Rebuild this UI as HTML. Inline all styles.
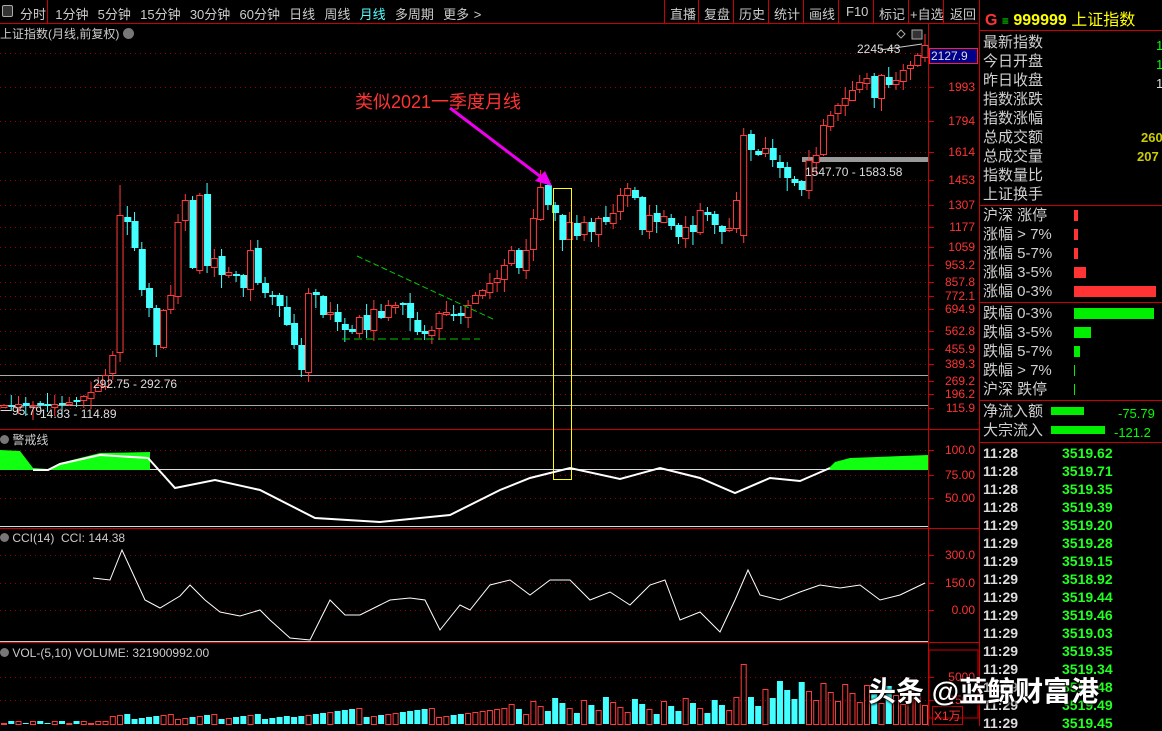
<!DOCTYPE html>
<html><head><meta charset="utf-8">
<style>
*{margin:0;padding:0;box-sizing:border-box}
body{width:1162px;height:726px;background:#000;overflow:hidden;position:relative;font-family:"Liberation Sans","Noto Sans CJK SC",sans-serif;color:#c8c8c8}
.a{position:absolute;white-space:nowrap}
.tab{font-size:13px;top:4px}
.rp{font-size:15px;color:#d0d0d0;line-height:19px}
.tm{font-size:14px;font-weight:bold}
</style></head><body>
<svg id="s" width="1162" height="726" style="position:absolute;left:0;top:0">
</svg>
<div class="a" style="left:2px;top:5px;width:11px;height:12px;border:1px solid #aaa;border-radius:2px;background:#333"></div>
<div class="a tab" style="left:20px;color:#ccc;word-spacing:1px">分时&nbsp; 1分钟&nbsp; 5分钟&nbsp; 15分钟&nbsp; 30分钟&nbsp; 60分钟&nbsp; 日线&nbsp; 周线&nbsp; <span style="color:#5ff">月线</span>&nbsp; 多周期&nbsp; 更多 &gt;</div>
<div class="a tab" style="left:670px;color:#ccc">直播</div>
<div class="a tab" style="left:704px;color:#ccc">复盘</div>
<div class="a tab" style="left:739px;color:#ccc">历史</div>
<div class="a tab" style="left:774px;color:#ccc">统计</div>
<div class="a tab" style="left:809px;color:#ccc">画线</div>
<div class="a tab" style="left:846px;color:#ccc">F10</div>
<div class="a tab" style="left:879px;color:#ccc">标记</div>
<div class="a tab" style="left:910px;color:#ccc">+自选</div>
<div class="a tab" style="left:950px;color:#ccc">返回</div>
<div class="a" style="left:0;top:25px;font-size:12px;color:#ccc">上证指数(月线,前复权) <span style="display:inline-block;width:11px;height:11px;border-radius:6px;background:#777;vertical-align:-1px"></span></div>
<div class="a" style="left:355px;top:88px;font-size:18px;color:#f33">类似2021一季度月线</div>
<div class="a" style="left:857px;top:42px;font-size:12px;color:#ddd">2245.43</div>
<div class="a" style="left:93px;top:377px;font-size:12px;color:#ddd">292.75 - 292.76</div>
<div class="a" style="left:805px;top:165px;font-size:12px;color:#ddd">1547.70 - 1583.58</div>
<div class="a" style="left:0;top:402px;font-size:12px;color:#ddd">一95.79</div>
<div class="a" style="left:40px;top:407px;font-size:12px;color:#ddd">14.83 - 114.89</div>
<div class="a" style="left:0;top:431px;font-size:12px;color:#ccc"><span style="display:inline-block;width:9px;height:9px;border-radius:5px;background:#777"></span> 警戒线</div>
<div class="a" style="left:0;top:531px;font-size:12px;color:#ccc"><span style="display:inline-block;width:9px;height:9px;border-radius:5px;background:#777"></span> CCI(14)&nbsp; CCI: 144.38</div>
<div class="a" style="left:0;top:646px;font-size:12px;color:#ccc"><span style="display:inline-block;width:9px;height:9px;border-radius:5px;background:#777"></span> VOL-(5,10) VOLUME: 321900992.00</div>
<div class="a" style="left:929px;top:48px;width:49px;height:16px;background:#00008b;border:1px solid #f22;color:#ddd;font-size:12px;padding-left:1px">2127.9</div>
<div id="ax"></div>
<div class="a" style="left:985px;top:6px;font-size:16px"><span style="color:#f33;font-weight:bold">G</span> <span style="color:#0f0;font-size:12px">≡</span> <span style="color:#ff0;font-weight:bold">999999</span> <span style="color:#ff0">上证指数</span></div>
<div class="a rp" style="left:983px;top:33px">最新指数<br>今日开盘<br>昨日收盘<br>指数涨跌<br>指数涨幅<br>总成交额<br>总成交量<br>指数量比<br>上证换手</div>
<div class="a" style="left:1156px;top:36px;font-size:13px;color:#0f0;line-height:19px">1<br>1<br><span style="color:#ddd">1</span></div>
<div class="a" style="left:1141px;top:128px;font-size:13px;color:#cc0;font-weight:bold;line-height:19px">260<br><span style="margin-left:-4px">207</span></div>
<div class="a rp" style="left:983px;top:206px">沪深 涨停<br>涨幅 &gt; 7%<br>涨幅 5-7%<br>涨幅 3-5%<br>涨幅 0-3%</div>
<div class="a rp" style="left:983px;top:304px">跌幅 0-3%<br>跌幅 3-5%<br>跌幅 5-7%<br>跌幅 &gt; 7%<br>沪深 跌停</div>
<div class="a rp" style="left:983px;top:402px">净流入额<br>大宗流入</div>
<div class="a" style="left:1118px;top:404px;font-size:13px;color:#0f0;line-height:19px">-75.79<br><span style="margin-left:-4px">-121.2</span></div>
<div id="tl"></div>
<div class="a" style="left:868px;top:670px;font-size:28px;color:#fff;font-weight:bold;text-shadow:0 0 3px #000,1px 1px 2px #000">头条 @蓝鲸财富港</div>
<script>
(function(){
var s=document.getElementById('s'),h='';
function L(x1,y1,x2,y2,c,w,d){h+='<line x1="'+x1+'" y1="'+y1+'" x2="'+x2+'" y2="'+y2+'" stroke="'+c+'" stroke-width="'+(w||1)+'"'+(d?' stroke-dasharray="'+d+'"':'')+'/>';}
function R(x,y,w,hh,f,st){h+='<rect x="'+x+'" y="'+y+'" width="'+w+'" height="'+hh+'" fill="'+f+'"'+(st?' stroke="'+st+'"':'')+'/>';}
L(0,23.5,978,23.5,'#c00');L(47.5,0,47.5,23,'#c00');
[664,698,733,768,803,838,873,908,943].forEach(function(x){L(x+.5,0,x+.5,23,'#c00')});
L(928.5,24,928.5,726,'#c00');L(979.5,0,979.5,726,'#c00');
L(0,429.5,979,429.5,'#c00');L(0,528.5,979,528.5,'#c00');L(0,642.5,979,642.5,'#c00');
L(980,30.5,1162,30.5,'#c00');L(980,205.5,1162,205.5,'#c00');L(980,302.5,1162,302.5,'#c00');L(980,400.5,1162,400.5,'#c00');L(980,442.5,1162,442.5,'#c00');
R(929,650,49,68,'none','#c00');
var g=[[53,'2244'],[87,'1993'],[121,'1794'],[152,'1614'],[180,'1453'],[205,'1307'],[227,'1177'],[247,'1059'],[265,'953.2'],[282,'857.8'],[296,'772.1'],[309,'694.9'],[331,'562.8'],[349,'455.9'],[364,'389.3'],[381,'269.2'],[394,'196.2'],[408,'115.9'],[450,'100.0'],[475,'75.00'],[498,'50.00'],[555,'300.0'],[583,'150.0'],[610,'0.00'],[677,'5000'],[700,'2500']];
var ax='';
g.forEach(function(a){L(0,a[0]+.5,928,a[0]+.5,'#900',1,'1 4');L(928,a[0]+.5,934,a[0]+.5,'#c00');if(a[0]!=53)ax+='<div class="a" style="left:930px;width:45px;text-align:right;top:'+(a[0]-7)+'px;font-size:12px;color:#f33">'+a[1]+'</div>';});
document.getElementById('ax').innerHTML=ax+'<div class="a" style="left:932px;top:706px;font-size:12px;color:#f33;border:1px solid #c00;padding:0 1px">X1万</div>';
L(0,375.5,928,375.5,'#aaa');L(0,405.5,928,405.5,'#aaa');R(802,157,126,5,'#999');
var c=[405,405,404,406,405,404,405,404,403,402,400,396,392,385,375,355,215,222,248,290,308,345,310,295,222,200,268,195,266,258,275,272,276,288,250,283,293,296,306,325,345,370,293,295,315,312,322,330,332,317,330,309,318,305,305,303,318,332,334,330,313,312,314,316,305,295,290,283,278,265,250,268,250,218,187,205,213,240,222,236,222,232,218,222,213,195,188,198,230,215,222,216,226,237,227,232,210,215,225,232,228,200,135,150,155,148,160,168,178,183,190,160,155,125,115,105,98,90,82,78,98,75,85,80,70,65,55,45];
var N=c.length,sp=921/(N-1);
for(var i=0;i<N;i++){var x=4+i*sp,o=i?c[i-1]+((i*37)%5-2):406,cl=c[i];if(i==16)o=352;if(i==102)o=235;
var up=cl<o,bt=Math.min(o,cl),bb=Math.max(o,cl);if(bb-bt<2)bb=bt+2;
var hi=bt-((i*53)%11)-1,lo=bb+((i*29)%13)+1;if(i==16)hi=185;if(i==74)hi=170;if(i==102)hi=128;
var col=up?'#ff3b3b':'#4ff';L(x,hi,x,lo,col);
if(up)R(x-3,bt+.5,6,bb-bt,'#000',col);else R(x-3,bt,7,bb-bt,col);
var v=i<15?3:i<40?5+((i*7)%6):i<70?7+((i*11)%10):i<102?10+((i*13)%18):i==102?60:18+((i*17)%26);
if(i<15&&i%3==0)v=1;
if(up)R(x-2.5,724.5-v,5,v,'none',col);else R(x-3,724-v,6,v,col);}
R(553.5,188.5,18,291,'none','#ff0');
L(357,256,495,320,'#0c0',1,'6 3');L(342,339,480,339,'#0c0',1,'8 4');
L(450,108,545,180,'#e0e',3);h+='<polygon points="552,186 535,181 545,171" fill="#e0e"/>';
L(880,50,922,44,'#ccc');h+='<rect x="912" y="30" width="10" height="9" fill="#333" stroke="#aaa"/><polygon points="901,30 905,34 901,38 897,34" fill="none" stroke="#aaa"/>';
L(0,469.5,928,469.5,'#ddd');
h+='<path d="M0,450 L20,451 L33,468 L48,469 L60,463 L80,458 L100,453 L150,452 L150,470 L0,470Z" fill="#1f1"/>';
h+='<path d="M828,469 L835,462 L850,458 L928,455 L928,470 L828,470Z" fill="#1f1"/>';
h+='<path d="M33,470 L48,470 L60,464 L100,455 L148,458 L175,488 L215,480 L260,490 L315,518 L380,522 L450,515 L500,490 L530,478 L570,468 L620,479 L660,468 L700,478 L735,493 L770,478 L800,481 L830,468" fill="none" stroke="#fff" stroke-width="2"/>';
L(0,526.5,928,526.5,'#ddd');
var cp=[[93,578],[110,580],[122,550],[145,600],[160,608],[180,596],[190,585],[205,600],[220,612],[240,616],[260,610],[270,620],[290,638],[310,640],[330,600],[345,615],[360,615],[380,605],[390,600],[410,598],[425,600],[440,630],[460,605],[470,610],[490,585],[510,580],[530,595],[550,580],[570,580],[590,600],[610,592],[630,605],[650,585],[665,580],[680,620],[700,612],[720,632],[735,600],[748,570],[760,595],[780,600],[800,592],[820,585],[840,588],[860,585],[880,600],[900,595],[925,583]];
h+='<polyline points="'+cp.join(' ')+'" fill="none" stroke="#fff"/>';
L(0,641.5,928,641.5,'#ccc');
R(1074,210,4,11,'#f33');R(1074,229,4,11,'#f33');R(1074,248,4,11,'#f33');R(1074,267,12,11,'#f33');R(1074,286,82,11,'#f33');
R(1074,308,80,11,'#0e0');R(1074,327,17,11,'#0e0');R(1074,346,6,11,'#0e0');R(1074,365,1,11,'#0e0');R(1074,384,1,11,'#0e0');
R(1051,407,33,8,'#0e0');R(1051,426,54,8,'#0e0');
s.innerHTML=h;
var t=['11:28','3519.62','11:28','3519.71','11:28','3519.35','11:28','3519.39','11:29','3519.20','11:29','3519.28','11:29','3519.15','11:29','3518.92','11:29','3519.44','11:29','3519.46','11:29','3519.03','11:29','3519.35','11:29','3519.34','11:29','3519.48','11:29','3519.49','11:29','3519.45'];
var tl='';for(var k=0;k<16;k++){var y=445+k*18;tl+='<div class="a tm" style="left:983px;top:'+y+'px;color:#ddd">'+t[2*k]+'</div><div class="a tm" style="left:1062px;top:'+y+'px;color:#2f2">'+t[2*k+1]+'</div>';}
document.getElementById('tl').innerHTML=tl;
})();
</script>
</body></html>
